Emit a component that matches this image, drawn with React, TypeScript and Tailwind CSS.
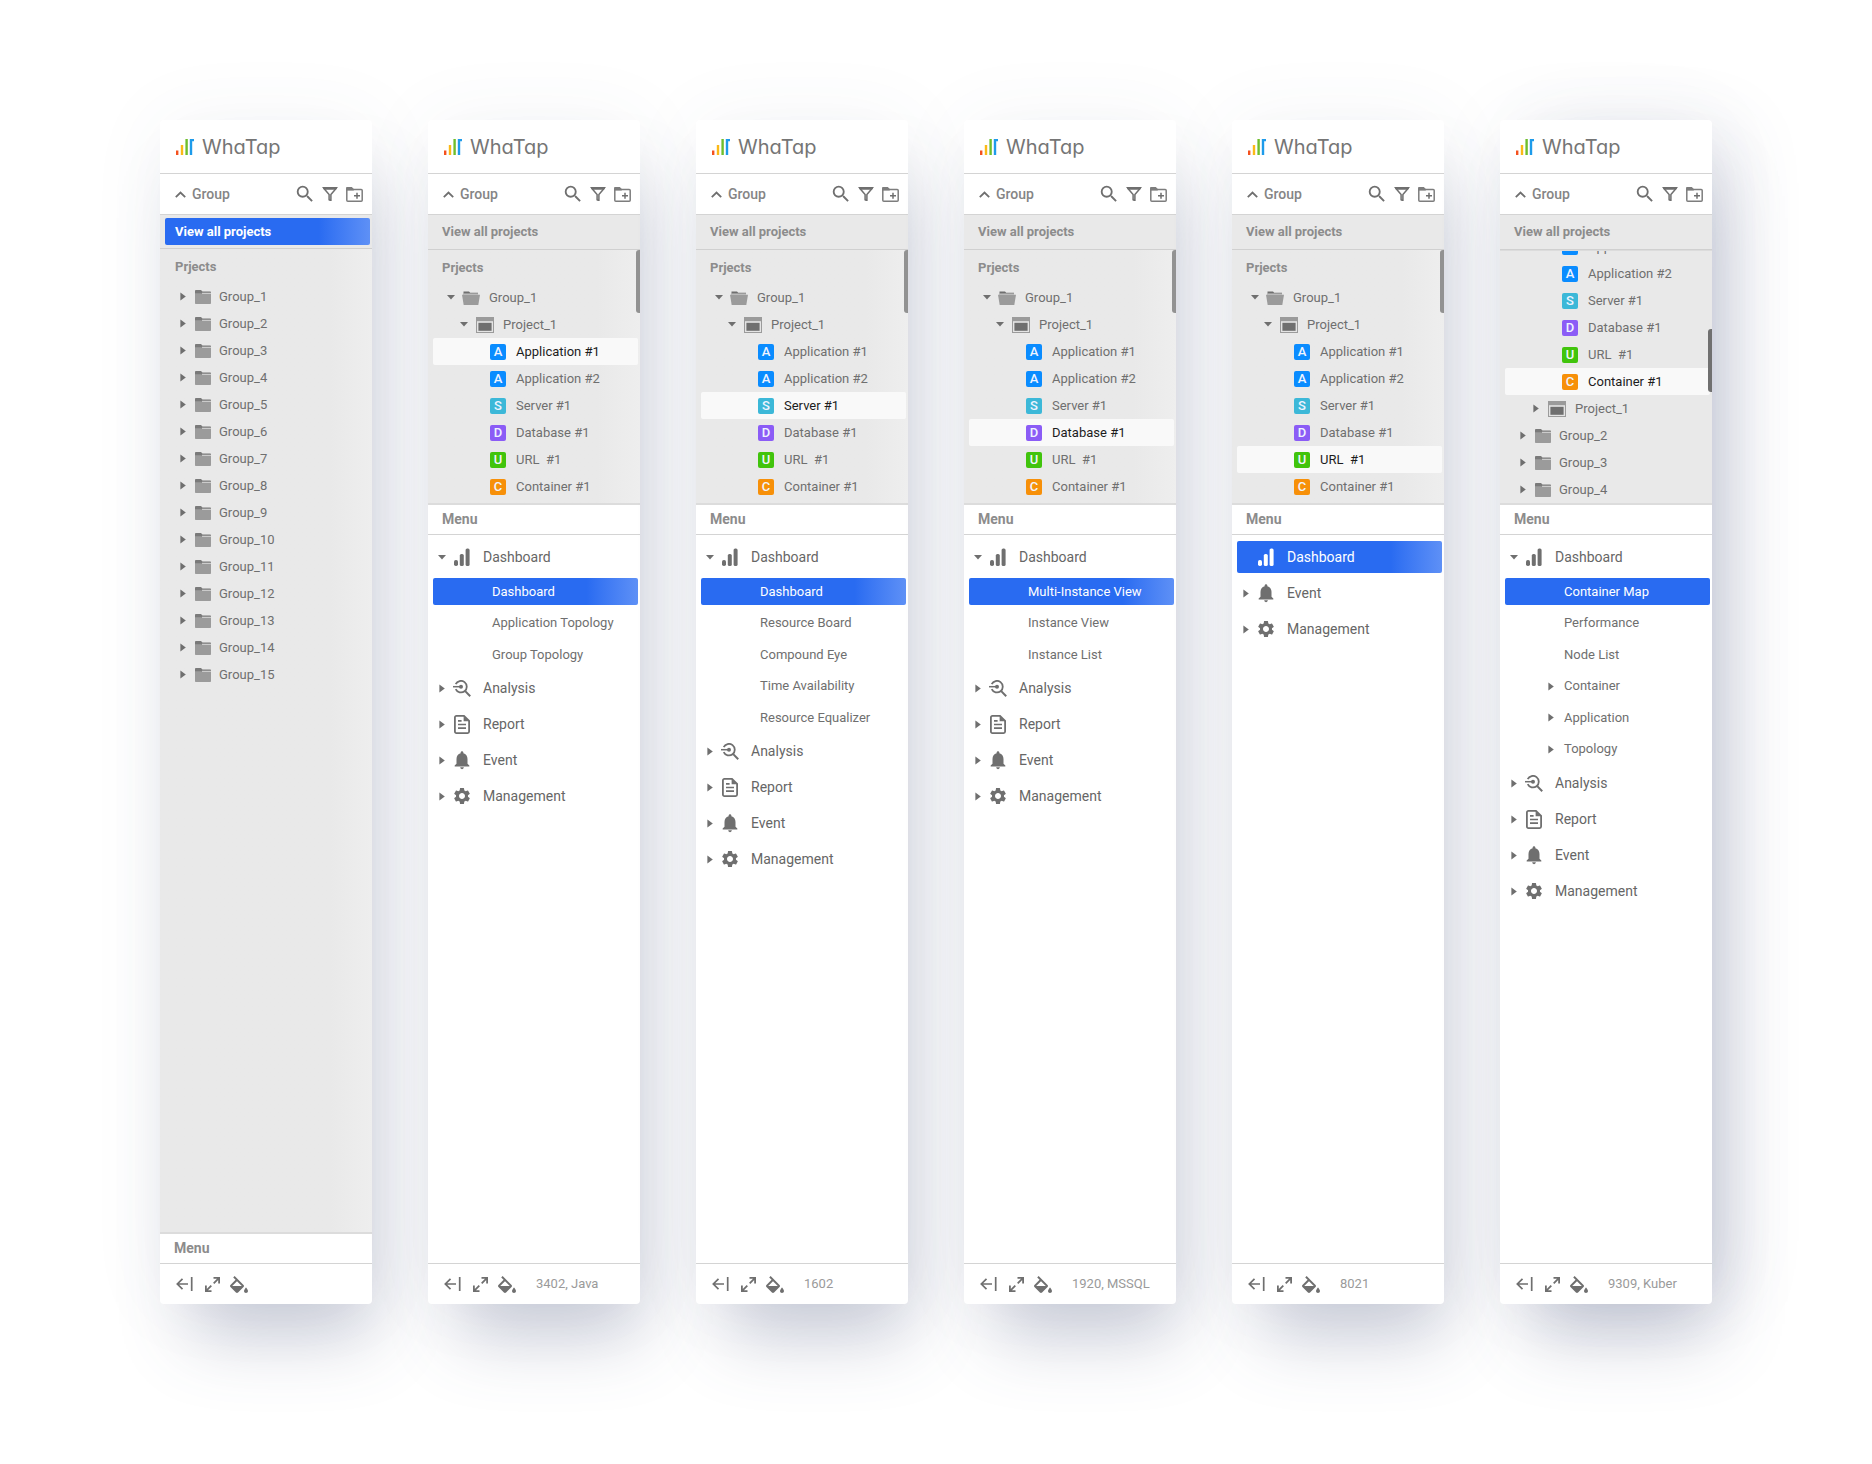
import React from "react";
import { MdSearch, MdSettings, MdNotifications } from "react-icons/md";

type Kind = "A" | "S" | "D" | "U" | "C";
type TreeItem =
  | { type: "group"; label: string; open?: boolean }
  | { type: "project"; label: string; open?: boolean }
  | { type: "instance"; label: string; kind: Kind; selected?: boolean };
type SubItem = { label: string; selected?: boolean; expandable?: boolean };
type MenuIcon = "dashboard" | "analysis" | "report" | "event" | "management";
type MenuItem = { label: string; icon: MenuIcon; selected?: boolean; children?: SubItem[] };
type PanelData = {
  viewAll?: boolean;
  scrolled?: boolean;
  tree: TreeItem[];
  menu?: MenuItem[];
  product?: string;
};

const badgeColor: Record<Kind, string> = {
  A: "bg-[#0a8cff]",
  S: "bg-[#3cb8d8]",
  D: "bg-[#8b5cf6]",
  U: "bg-[#41c40c]",
  C: "bg-[#f79009]",
};

const instances: { label: string; kind: Kind }[] = [
  { label: "Application #1", kind: "A" },
  { label: "Application #2", kind: "A" },
  { label: "Server #1", kind: "S" },
  { label: "Database #1", kind: "D" },
  { label: "URL\u00a0 #1", kind: "U" },
  { label: "Container #1", kind: "C" },
];

const instanceRows = (selected: number): TreeItem[] =>
  instances.map((it, i) => ({ type: "instance", ...it, selected: i === selected }));

const openTree = (selected: number): TreeItem[] => [
  { type: "group", label: "Group_1", open: true },
  { type: "project", label: "Project_1", open: true },
  ...instanceRows(selected),
];

const analysis: MenuItem = { label: "Analysis", icon: "analysis" };
const report: MenuItem = { label: "Report", icon: "report" };
const event: MenuItem = { label: "Event", icon: "event" };
const management: MenuItem = { label: "Management", icon: "management" };

const fullMenu = (children: SubItem[]): MenuItem[] => [
  { label: "Dashboard", icon: "dashboard", children },
  analysis,
  report,
  event,
  management,
];

const panels: PanelData[] = [
  {
    viewAll: true,
    tree: Array.from({ length: 15 }, (_, i) => ({ type: "group", label: `Group_${i + 1}` })),
  },
  {
    tree: openTree(0),
    menu: fullMenu([
      { label: "Dashboard", selected: true },
      { label: "Application Topology" },
      { label: "Group Topology" },
    ]),
    product: "3402, Java",
  },
  {
    tree: openTree(2),
    menu: fullMenu([
      { label: "Dashboard", selected: true },
      { label: "Resource Board" },
      { label: "Compound Eye" },
      { label: "Time Availability" },
      { label: "Resource Equalizer" },
    ]),
    product: "1602",
  },
  {
    tree: openTree(3),
    menu: fullMenu([
      { label: "Multi-Instance View", selected: true },
      { label: "Instance View" },
      { label: "Instance List" },
    ]),
    product: "1920, MSSQL",
  },
  {
    tree: openTree(4),
    menu: [{ label: "Dashboard", icon: "dashboard", selected: true }, event, management],
    product: "8021",
  },
  {
    scrolled: true,
    tree: [
      ...instanceRows(5),
      { type: "project", label: "Project_1" },
      { type: "group", label: "Group_2" },
      { type: "group", label: "Group_3" },
      { type: "group", label: "Group_4" },
    ],
    menu: fullMenu([
      { label: "Container Map", selected: true },
      { label: "Performance" },
      { label: "Node List" },
      { label: "Container", expandable: true },
      { label: "Application", expandable: true },
      { label: "Topology", expandable: true },
    ]),
    product: "9309, Kuber",
  },
];

function Caret({ open }: { open?: boolean }) {
  return (
    <span className="flex w-3 shrink-0 justify-center text-[#6f6f6f]">
      {open ? (
        <svg width="8" height="5" viewBox="0 0 8 5" fill="currentColor" aria-hidden="true">
          <path d="M0 0h8L4 4.600z" />
        </svg>
      ) : (
        <svg width="6" height="9" viewBox="0 0 6 9" fill="currentColor" aria-hidden="true">
          <path d="M.4.4L5.800 4.500.4 8.600z" />
        </svg>
      )}
    </span>
  );
}

function LogoMark() {
  return (
    <svg width="18" height="16" viewBox="0 0 18 16" aria-hidden="true">
      <rect x="0" y="11.5" width="2.4" height="4.5" fill="#f4511e" />
      <rect x="4.8" y="6" width="2.4" height="10" fill="#fbb917" />
      <rect x="9.4" y="0" width="2.4" height="16" fill="#6fbe2c" />
      <path d="M13.8 0H18v2.2h-1.8V16h-2.4z" fill="#1e9bea" />
    </svg>
  );
}

function FolderIcon({ open }: { open?: boolean }) {
  return open ? (
    <svg width="18" height="14" viewBox="0 0 18 14" aria-hidden="true">
      <path d="M1.5 0.5h5.5l1.2 1.3H16V4H1.5z" fill="#6f6f6f" />
      <path d="M1.5 2.6h14.8v1.2H1.5z" fill="#dcdcdc" />
      <path d="M0 3.8h18L16.3 14H1.7z" fill="#9b9b9b" />
    </svg>
  ) : (
    <svg width="16" height="14" viewBox="0 0 16 14" aria-hidden="true">
      <path d="M0 1.2C0 .5.4 0 1 0h5l1.5 1.6H15c.6 0 1 .4 1 1V4H0z" fill="#7a7a7a" />
      <path d="M7 2.8h9v1H7z" fill="#e0e0e0" />
      <path d="M0 3.2h6.6l.6.8H16v9c0 .6-.4 1-1 1H1c-.6 0-1-.4-1-1z" fill="#9b9b9b" />
    </svg>
  );
}

function ProjectIcon() {
  return (
    <svg width="18" height="16" viewBox="0 0 18 16" aria-hidden="true">
      <rect x="0.5" y="0.5" width="17" height="15" fill="#e4e4e4" stroke="#9b9b9b" />
      <rect x="0" y="0" width="18" height="4.2" fill="#9b9b9b" />
      <rect x="2.4" y="5.8" width="13.2" height="8" fill="#6f6f6f" />
    </svg>
  );
}

function FilterIcon() {
  return (
    <svg width="16" height="14" viewBox="0 0 16 14" fill="none" aria-hidden="true">
      <path d="M0 0h16l-2.200 2.800H2.200z" fill="#6f6f6f" />
      <path d="M1.500 1l5.600 6.600v5.100l1.800 1V7.600L14.500 1" stroke="#6f6f6f" strokeWidth="1.500" />
    </svg>
  );
}

function FolderPlusIcon() {
  return (
    <svg width="17" height="15" viewBox="0 0 17 15" fill="none" aria-hidden="true">
      <path d="M.8 2.6h14.4c.5 0 1 .4 1 1v9.600c0 .6-.4 1-1 1H1.8c-.6 0-1-.4-1-1z" stroke="#7d7d7d" strokeWidth="1.5" />
      <path d="M0 1.2C0 .5.5 0 1.2 0h4.6l2 2v1.4H0z" fill="#7d7d7d" />
      <path d="M11 5.7v6M8 8.7h6" stroke="#6f6f6f" strokeWidth="1.5" />
    </svg>
  );
}

function MenuGlyph({ icon }: { icon: MenuIcon }) {
  switch (icon) {
    case "dashboard":
      return (
        <svg width="16" height="18" viewBox="0 0 16 18" fill="currentColor" aria-hidden="true">
          <rect x="0" y="12" width="4" height="6" rx="1.8" />
          <rect x="5.8" y="6" width="4" height="12" rx="1.6" />
          <rect x="11.6" y="0.4" width="4" height="17.6" rx="1.6" />
        </svg>
      );
    case "analysis":
      return (
        <svg width="18" height="17" viewBox="0 0 18 17" fill="none" stroke="currentColor" strokeWidth="1.8" aria-hidden="true">
          <path d="M2.7 4.2a5.8 5.8 0 1 1 0 4.9" />
          <path d="M12.2 11.1l5 5.1" strokeWidth="2" />
          <path d="M0 6.7h7" strokeWidth="1.5" />
          <circle cx="8" cy="6.7" r="2" fill="currentColor" stroke="none" />
        </svg>
      );
    case "report":
      return (
        <svg width="16" height="19" viewBox="0 0 16 19" fill="none" stroke="currentColor" strokeWidth="1.8" aria-hidden="true">
          <path d="M2.4.9H10l5.1 5v10.7c0 .8-.6 1.5-1.5 1.5H2.4c-.8 0-1.5-.7-1.5-1.5V2.4C.9 1.600 1.600.9 2.4.9z" />
          <path d="M4 5.900h3.600M4 9.500h8M4 13.100h8" strokeWidth="1.700" />
          <path d="M9.600 1v5.200h5.200z" fill="currentColor" stroke="none" />
        </svg>
      );
    case "event":
      return <MdNotifications size={22} aria-hidden="true" />;
    case "management":
      return <MdSettings size={20} aria-hidden="true" />;
  }
}

function TreeRow({ item }: { item: TreeItem }) {
  if (item.type === "group") {
    return (
      <button type="button" className="flex h-[27px] w-full items-center pl-[17px] text-[13px] text-[#6f6f6f]">
        <Caret open={item.open} />
        <span className="ml-[5px] flex w-[18px] shrink-0 justify-center">
          <FolderIcon open={item.open} />
        </span>
        <span className={item.open ? "ml-[9px]" : "ml-[7px]"}>{item.label}</span>
      </button>
    );
  }
  if (item.type === "project") {
    return (
      <button type="button" className="flex h-[27px] w-full items-center pl-[30px] text-[13px] text-[#6f6f6f]">
        <Caret open={item.open} />
        <span className="mr-[9px] ml-1.5 shrink-0">
          <ProjectIcon />
        </span>
        {item.label}
      </button>
    );
  }
  return (
    <div className="pr-0.5 pl-[5px]">
      <button
        type="button"
        className={`flex h-[27px] w-full items-center gap-2.5 rounded-[2px] pl-[57px] text-[13px] whitespace-nowrap ${
          item.selected ? "bg-[#f9f9f9] text-[#1c1c1c]" : "text-[#6f6f6f]"
        }`}
      >
        <span
          className={`flex size-4 shrink-0 items-center justify-center rounded-[2px] text-[13px] font-medium text-[#f0f4ff] ${badgeColor[item.kind]}`}
        >
          {item.kind}
        </span>
        {item.label}
      </button>
    </div>
  );
}

const activeBlue = (flat?: boolean) =>
  flat ? "bg-[#296bf1] text-white" : "bg-linear-to-r from-[#296bf1] from-75% to-[#5e90f6] text-white";

function MenuRow({ item, flat }: { item: MenuItem; flat?: boolean }) {
  return (
    <li>
      <div className="flex h-9 items-center pr-0.5 pl-[5px]">
        <button
          type="button"
          className={`flex h-8 w-full items-center rounded-[2px] pl-[3px] text-sm ${
            item.selected ? activeBlue(flat) : "text-[#666666]"
          }`}
        >
          {item.selected ? <span className="w-3" /> : <Caret open={!!item.children} />}
          <span className={`mr-[7px] flex w-7 justify-center ${item.selected ? "text-white" : "text-[#6f6f6f]"}`}>
            <MenuGlyph icon={item.icon} />
          </span>
          {item.label}
        </button>
      </div>
      {item.children && (
        <ul className="pt-px">
          {item.children.map((sub) => (
            <li key={sub.label} className="flex h-[31px] items-center pr-0.5 pl-[5px] even:h-8">
              <a
                href="#"
                className={`flex h-[27px] w-full items-center rounded-[2px] text-[13px] whitespace-nowrap ${
                  sub.expandable ? "pl-10" : "pl-[59px]"
                } ${sub.selected ? activeBlue(flat) : "text-[#6f6f6f]"}`}
              >
                {sub.expandable && (
                  <span className="mr-[7px]">
                    <Caret />
                  </span>
                )}
                {sub.label}
              </a>
            </li>
          ))}
        </ul>
      )}
    </li>
  );
}

function Panel({ data }: { data: PanelData }) {
  const { viewAll, scrolled, tree, menu, product } = data;
  return (
    <aside
      className={`flex flex-col rounded-[4px] bg-white ${
        scrolled
          ? "shadow-[16px_48px_72px_-16px_rgba(75,85,125,0.3),0_0_80px_rgba(75,85,125,0.06),32px_0_72px_-8px_rgba(75,85,125,0.11)]"
          : "shadow-[16px_48px_72px_-16px_rgba(75,85,125,0.3),0_0_80px_rgba(75,85,125,0.06)]"
      }`}
    >
      <header className="flex h-[54px] items-center gap-2 border-b border-[#d4d4d4] pl-4">
        <LogoMark />
        <span className="font-[Inter,sans-serif] text-xl leading-7 text-[#757575] [font-feature-settings:'cv11']">
          WhaTap
        </span>
      </header>

      <div className="flex h-[41px] items-center justify-between border-b border-[#d4d4d4] pr-[9px] pl-[15px]">
        <button type="button" className="flex items-center gap-1.5 text-sm font-medium text-[#858585]">
          <svg width="11" height="7" viewBox="0 0 11 7" fill="none" stroke="#6f6f6f" strokeWidth="1.8" aria-hidden="true">
            <path d="M.8 6.200l4.700-4.700 4.700 4.700" />
          </svg>
          Group
        </button>
        <div className="flex items-center gap-2">
          <button type="button" aria-label="Search" className="-mr-0.5 text-[#6f6f6f]">
            <MdSearch size={22} />
          </button>
          <button type="button" aria-label="Filter">
            <FilterIcon />
          </button>
          <button type="button" aria-label="New group">
            <FolderPlusIcon />
          </button>
        </div>
      </div>

      <div
        className={`flex items-center border-b border-[#d0d0d0] bg-[#e9e9e9] pr-0.5 pl-[5px] ${viewAll ? "h-[34px]" : "h-[35px]"}`}
      >
        <a
          href="#"
          className={`flex h-[27px] w-full items-center rounded-[2px] text-[13px] font-bold ${
            viewAll ? `pl-2.5 ${activeBlue()}` : "pl-[9px] text-[#8c8c8c]"
          }`}
        >
          View all projects
        </a>
      </div>

      <div
        className={`relative overflow-hidden ${
          scrolled ? "border-t border-[#dcdcdc] bg-[#e9e9e9]" : "bg-linear-to-r from-[#e9e9e9] from-80% to-[#eeeeee]"
        } ${viewAll ? "flex-1" : "h-[253px]"}`}
      >
        {!scrolled && (
          <h2 className={`flex h-[34px] items-center pt-0.5 text-[13px] font-bold text-[#8c8c8c] ${viewAll ? "pl-[15px]" : "pl-3.5"}`}>
            Prjects
          </h2>
        )}
        <div className={scrolled ? "-mt-[18px]" : ""}>
          {tree.map((item) => (
            <TreeRow key={item.label} item={item} />
          ))}
        </div>
        {!viewAll && (
          <div
            className={`absolute right-0 h-[63px] w-1 rounded-l-[3px] ${scrolled ? "top-[78px] bg-[#707070]" : "top-0 bg-[#929292]"}`}
          />
        )}
      </div>

      <h2 className="flex h-8 items-center border-t-2 border-b border-t-[#dcdcdc] border-b-[#d4d4d4] pb-0.5 pl-3.5 text-sm font-bold text-[#8c8c8c]">
        Menu
      </h2>

      {menu && (
        <ul className="flex-1 pt-1">
          {menu.map((item) => (
            <MenuRow key={item.label} item={item} flat={scrolled} />
          ))}
        </ul>
      )}

      <footer
        className={`flex items-center pl-4 text-[#6f6f6f] ${menu ? "h-[41px] border-t border-[#d4d4d4]" : "h-10"}`}
      >
        <button type="button" aria-label="Collapse">
          <svg width="17" height="14" viewBox="0 0 17 14" fill="none" stroke="currentColor" strokeWidth="1.7" aria-hidden="true">
            <path d="M12 7H1.500M6.500 1.800L1.300 7l5.200 5.200M15.700 0v14" />
          </svg>
        </button>
        <button type="button" aria-label="Full screen" className="ml-3">
          <svg width="15" height="15" viewBox="0 0 15 15" fill="none" stroke="currentColor" strokeWidth="1.800" aria-hidden="true">
            <path d="M8.500.9h5.600v5.600M14.100.9L8.700 6.300M6.500 14.100H.9V8.500M.9 14.100l5.400-5.400" />
          </svg>
        </button>
        <button type="button" aria-label="Theme" className="ml-2.5">
          <svg width="18" height="17" viewBox="3 0 18 17" fill="currentColor" aria-hidden="true">
            <path d="M16.560 8.940L7.620 0 6.210 1.410l2.380 2.380-5.150 5.150c-.59.59-.59 1.540 0 2.120l5.500 5.500c.29.29.68.44 1.060.44s.77-.15 1.060-.44l5.500-5.500c.59-.58.59-1.530 0-2.120zM5.210 10L10 5.210 14.790 10H5.210zM19 11.500s-2 2.170-2 3.500c0 1.100.9 2 2 2s2-.9 2-2c0-1.330-2-3.500-2-3.500z" />
          </svg>
        </button>
        {product && <span className="ml-5 text-[13px] whitespace-nowrap text-[#9a9a9a]">{product}</span>}
      </footer>
    </aside>
  );
}

export default function App() {
  return (
    <main className="flex min-h-screen bg-white px-40 pt-[120px] pb-40 font-[Roboto,sans-serif]">
      <div className="grid flex-1 grid-cols-6 gap-14">
        {panels.map((data, i) => (
          <Panel key={i} data={data} />
        ))}
      </div>
    </main>
  );
}
